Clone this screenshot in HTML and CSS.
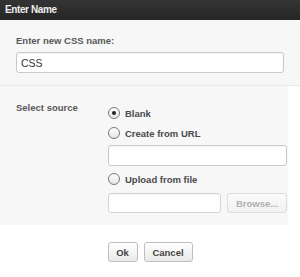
FILE: index.html
```html
<!DOCTYPE html>
<html lang="en">
<head>
    <meta charset="UTF-8">
    <title>Enter Name</title>
    <link rel="stylesheet" href="styles.css">
</head>
<body>
    <div class="dialog">
        <div class="titlebar">Enter Name</div>

        <!-- Name -->
        <div class="name-section">
            <label class="field-label" for="css-name">Enter new CSS name:</label>
            <input id="css-name" class="text-input" type="text" value="CSS">
        </div>

        <!-- Source -->
        <div class="source-section">
            <div class="source-label">Select source</div>
            <div class="source-options">
                <label class="radio-row">
                    <input type="radio" name="source" checked>
                    <span>Blank</span>
                </label>
                <label class="radio-row">
                    <input type="radio" name="source">
                    <span>Create from URL</span>
                </label>
                <input class="text-input url-input" type="text">
                <label class="radio-row">
                    <input type="radio" name="source">
                    <span>Upload from file</span>
                </label>
                <div class="file-row">
                    <input class="text-input file-input" type="text" disabled>
                    <button class="btn browse-btn" disabled>Browse...</button>
                </div>
            </div>
        </div>

        <div class="actions">
            <button class="btn">Ok</button>
            <button class="btn">Cancel</button>
        </div>
    </div>
</body>
</html>
```

FILE: styles.css
```css
/* General Reset */
* {
    margin: 0;
    padding: 0;
    box-sizing: border-box;
}

body {
    font-family: "Liberation Sans", Arial, sans-serif;
    background: #ffffff;
    width: 300px;
    height: 277px;
    overflow: hidden;
}

/* Title bar */
.titlebar {
    height: 20px;
    line-height: 20px;
    padding-left: 5px;
    background: linear-gradient(#343434, #262626);
    color: #eeeeee;
    font-size: 10px;
    font-weight: bold;
    letter-spacing: -0.4px;
}

/* Name section */
.name-section {
    background: #f7f7f7;
    padding: 15px 16px 12px;
    border-bottom: 1px solid #e9e9e9;
}

.field-label {
    display: block;
    font-size: 9.5px;
    line-height: 12px;
    font-weight: bold;
    color: #585858;
    margin-bottom: 5px;
}

.text-input {
    display: block;
    width: 100%;
    height: 21px;
    padding: 0 4px;
    font-family: inherit;
    font-size: 10.5px;
    color: #333;
    background: #fff;
    border: 1px solid #c9c9c9;
    border-radius: 3px;
    box-shadow: inset 0 1px 1px rgba(0, 0, 0, 0.04);
    outline: none;
}

/* Source section */
.source-section {
    display: grid;
    grid-template-columns: 92px 1fr;
    width: 288px;
    padding: 0 1px 12px 16px;
    background: #f7f7f7;
}

.source-label {
    padding-top: 16px;
    font-size: 9.5px;
    line-height: 12px;
    font-weight: bold;
    color: #585858;
}

.source-options {
    padding-top: 20px;
    display: flex;
    flex-direction: column;
}

.radio-row {
    display: flex;
    align-items: center;
    gap: 5px;
    height: 14px;
    font-size: 9.5px;
    font-weight: bold;
    color: #4a4a4a;
}

.radio-row + .radio-row {
    margin-top: 6px;
}

.radio-row input {
    appearance: none;
    -webkit-appearance: none;
    width: 12px;
    height: 12px;
    border: 1px solid #7a7a7a;
    border-radius: 50%;
    background: linear-gradient(#ffffff, #e4e4e4);
    display: grid;
    place-content: center;
}

.radio-row input:checked::before {
    content: "";
    width: 4px;
    height: 4px;
    border-radius: 50%;
    background: #222;
}

.url-input {
    margin: 5px 0 6px;
}

.file-row {
    display: flex;
    gap: 6px;
    margin-top: 7px;
}

.file-input {
    width: 113px;
    height: 20px;
    border-color: #d4d4d4;
}

/* Buttons */
.btn {
    height: 20px;
    padding: 0 7px;
    font-family: inherit;
    font-size: 9.5px;
    font-weight: bold;
    color: #444;
    background: linear-gradient(#ffffff, #e9e9e9);
    border: 1px solid #bdbdbd;
    border-radius: 3px;
}

.browse-btn {
    flex: 1;
    color: #b0b0b0;
    border-color: #dcdcdc;
    background: linear-gradient(#fbfbfb, #f1f1f1);
}

.actions {
    display: flex;
    justify-content: center;
    gap: 6px;
    padding-top: 17px;
}

.actions .btn:first-child {
    width: 30px;
    padding: 0;
}

.actions .btn:last-child {
    width: 49px;
    padding: 0;
}
```
